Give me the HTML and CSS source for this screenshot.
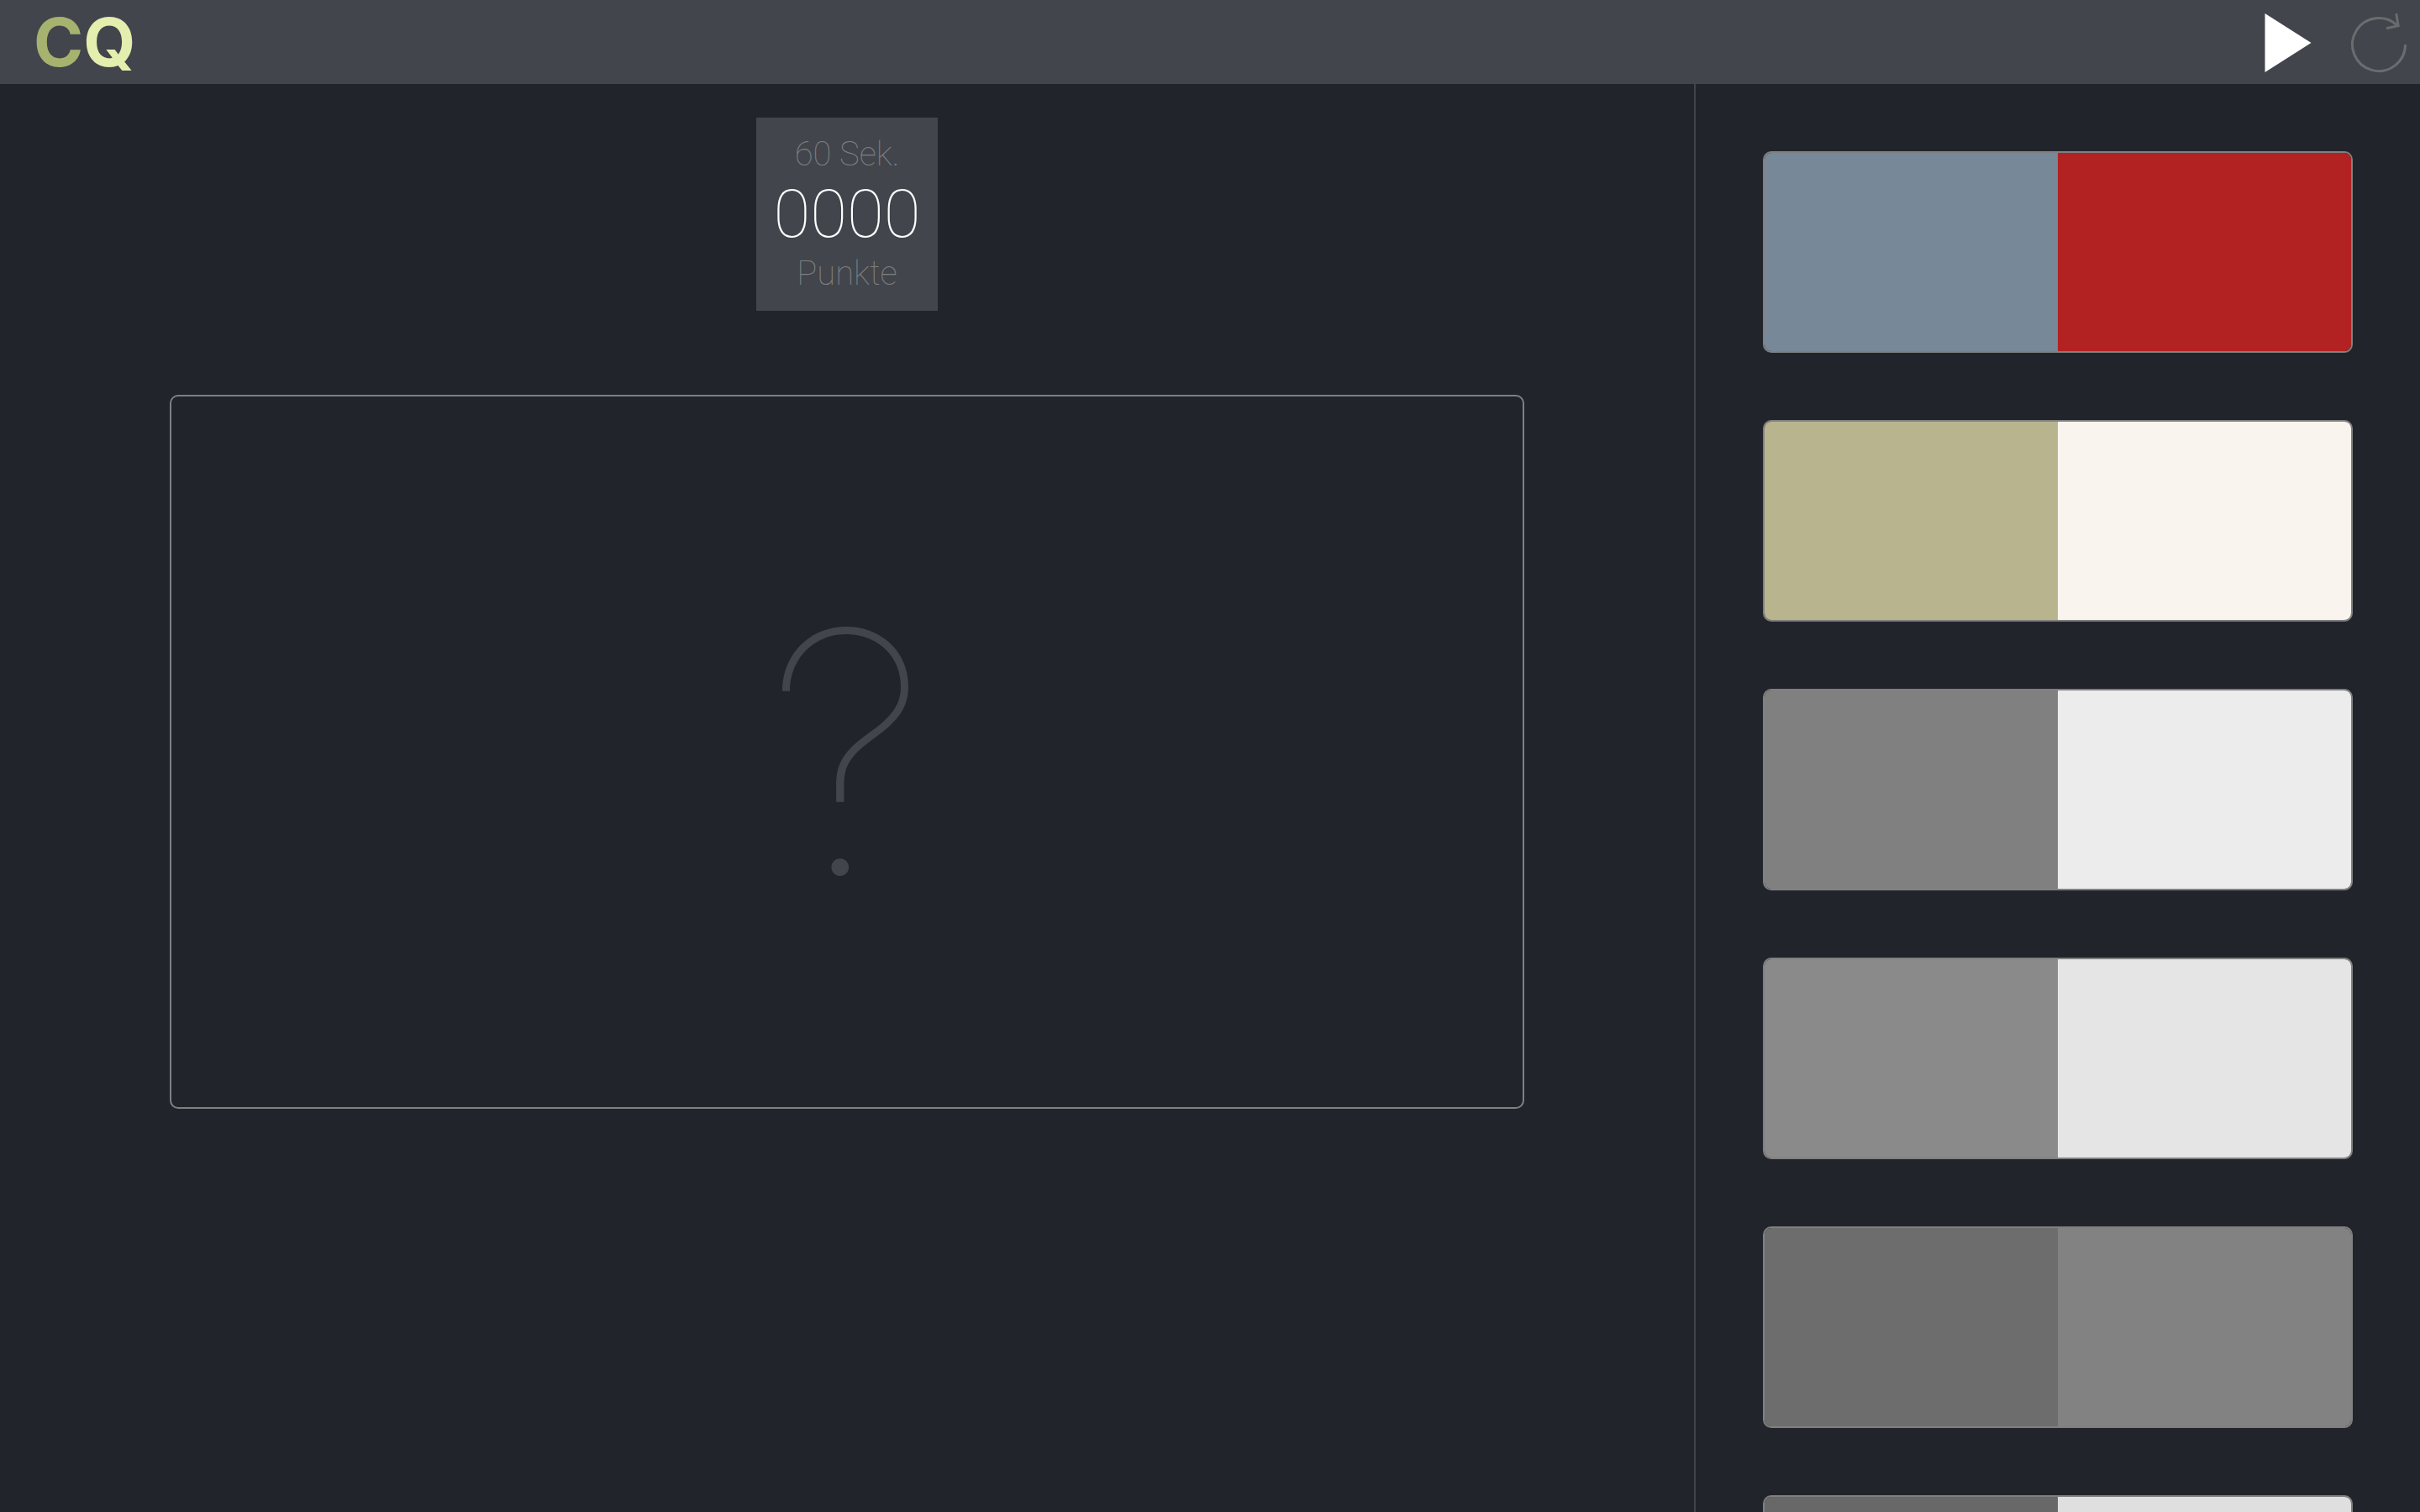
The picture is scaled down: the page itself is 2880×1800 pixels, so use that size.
FILE: index.html
```html
<!DOCTYPE html>
<html lang="de">
<head>
  <meta charset="utf-8">
  <meta name="viewport" content="width=device-width, initial-scale=1">
  <title>CQ</title>
  <link rel="stylesheet" href="styles.css">
</head>
<body>
  <header class="topbar">
    <a class="logo" href="#"><span class="logo-c">C</span><span class="logo-q">Q</span></a>
    <div class="controls">
      <button class="control" type="button" aria-label="Start">
        <svg class="icon" viewBox="0 0 100 100" aria-hidden="true">
          <path class="icon-play" d="M15.500 16L70.500 51L15.500 86Z"/>
        </svg>
      </button>
      <button class="control" type="button" aria-label="Neu laden">
        <svg class="icon" viewBox="0 0 100 100" aria-hidden="true">
          <path class="icon-reload" d="M82.500 53A31.500 31.500 0 1 1 74 31.500M71.700 16.200L74.200 30.600L60 33.700"/>
        </svg>
      </button>
    </div>
  </header>
  <div class="layout">
    <main class="game">
      <section class="score">
        <p class="score-label">60 Sek.</p>
        <p class="score-value">0000</p>
        <p class="score-label">Punkte</p>
      </section>
      <section class="board"><span class="board-mark">?</span></section>
    </main>
    <aside class="sidebar">
      <ul class="pairs">
        <li class="pair"><span class="swatch slate"></span><span class="swatch red"></span></li>
        <li class="pair"><span class="swatch olive"></span><span class="swatch cream"></span></li>
        <li class="pair"><span class="swatch gray-50"></span><span class="swatch gray-93"></span></li>
        <li class="pair"><span class="swatch gray-54"></span><span class="swatch gray-90"></span></li>
        <li class="pair"><span class="swatch gray-43"></span><span class="swatch gray-51"></span></li>
        <li class="pair"><span class="swatch gray-41"></span><span class="swatch gray-87"></span></li>
      </ul>
    </aside>
  </div>
</body>
</html>
```

FILE: styles.css
```css
*,
*::before,
*::after {
  box-sizing: border-box;
}

body {
  display: flex;
  flex-direction: column;
  height: 100vh;
  margin: 0;
  overflow: hidden;
  background: #21242b;
  color: #fff;
  font-family: Inter, "Liberation Sans", sans-serif;
  font-weight: 100;
}

.topbar {
  display: flex;
  flex: none;
  align-items: center;
  justify-content: space-between;
  height: 100px;
  padding-left: 40px;
  background: #42454c;
}

.logo {
  font-size: 80px;
  font-weight: 700;
  line-height: 100px;
  text-decoration: none;
}

.logo-c {
  color: #a6b36f;
}

.logo-q {
  color: #e4eeae;
}

.controls {
  display: flex;
}

.control {
  width: 100px;
  height: 100px;
  margin: 0;
  padding: 0;
  border: 0;
  background: none;
  cursor: pointer;
}

.icon {
  display: block;
  width: 100%;
  height: 100%;
}

.icon-play {
  fill: #fff;
}

.icon-reload {
  fill: none;
  stroke: #6a6c6f;
  stroke-width: 3;
}

.layout {
  display: grid;
  flex: 1;
  grid-template-columns: 7fr 3fr;
  min-height: 0;
}

.game {
  display: flex;
  flex-direction: column;
  align-items: center;
  gap: 100px;
  padding-top: 40px;
}

.score {
  padding: 20px;
  background: #42454c;
  font-family: Roboto, Inter, sans-serif;
  text-align: center;
}

.score-label,
.score-value {
  margin: 0;
}

.score-label {
  color: gray;
  font-size: 40px;
  line-height: 48px;
}

.score-value {
  font-size: 80px;
  line-height: 94px;
}

.board {
  display: flex;
  align-items: center;
  justify-content: center;
  width: 80%;
  height: 50vh;
  max-height: 850px;
  border: 2px solid gray;
  border-radius: 10px;
}

.board-mark {
  color: #42454c;
  font-size: 400px;
  line-height: 1;
}

.sidebar {
  padding: 80px;
  border-left: 2px solid #42454c;
  overflow: hidden;
}

.pairs {
  display: grid;
  gap: 80px;
  margin: 0;
  padding: 0;
  list-style: none;
}

.pair {
  display: flex;
  height: 240px;
  border: 2px solid gray;
  border-radius: 10px;
  overflow: hidden;
}

.swatch {
  flex: 1;
}

.slate { background: #778899; }
.red { background: #b22222; }
.olive { background: #b8b48e; }
.cream { background: #f9f4ed; }
.gray-50 { background: #808080; }
.gray-93 { background: #ececec; }
.gray-54 { background: #8a8a8a; }
.gray-90 { background: #e5e5e5; }
.gray-43 { background: #6d6d6d; }
.gray-51 { background: #828282; }
.gray-41 { background: #686868; }
.gray-87 { background: #dfdfdf; }
```
